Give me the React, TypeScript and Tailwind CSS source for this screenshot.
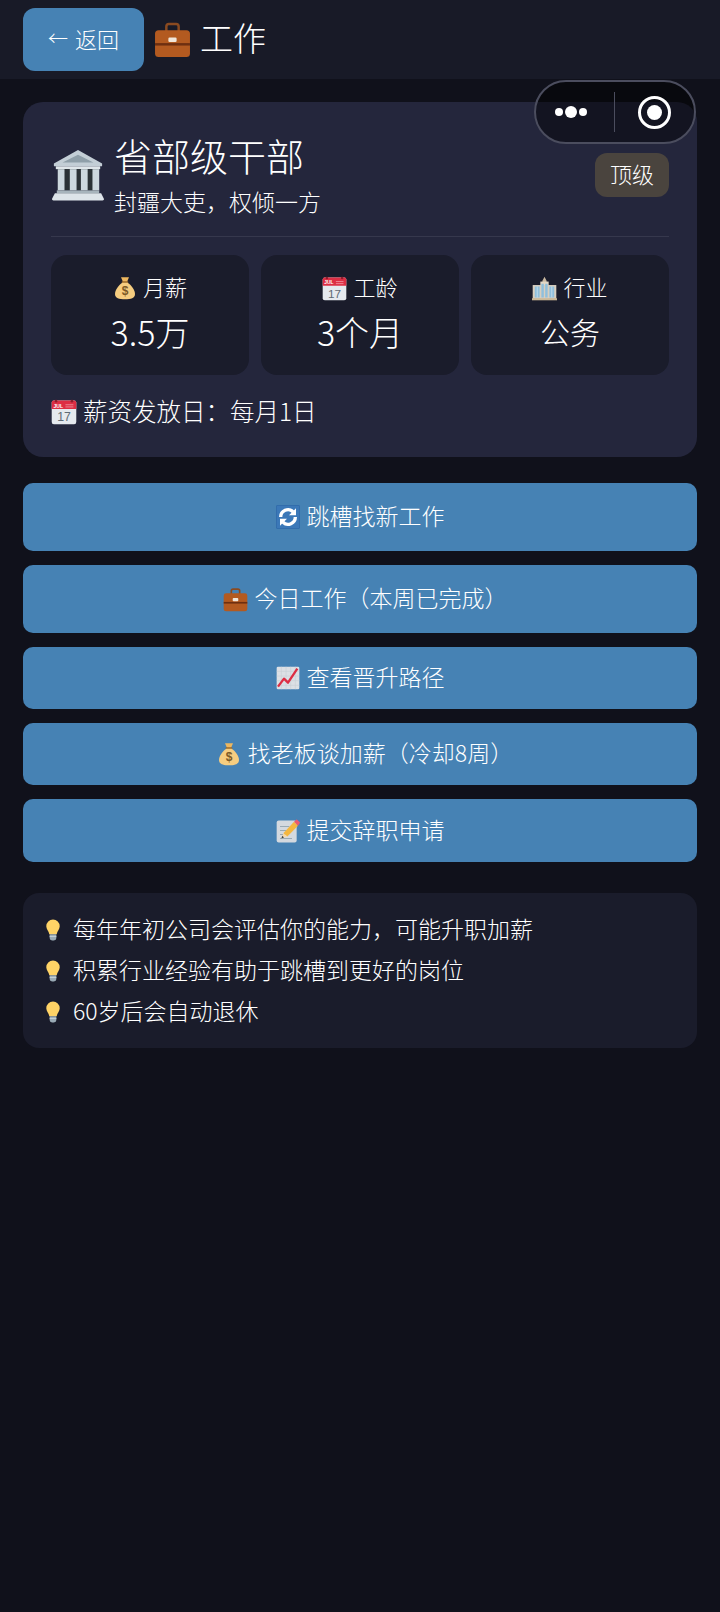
const Briefcase = ({ className }: { className: string }) => (
  <svg viewBox="0 0 36 36" className={className}>
    <path d="M12 10V5.500A2.500 2.500 0 0 1 14.500 3h7A2.500 2.500 0 0 1 24 5.500V10" fill="none" stroke="#8a4a20" strokeWidth="2.400" />
    <rect x="1" y="9" width="34" height="26" rx="3.500" fill="#b35a20" />
    <rect x="1" y="21.500" width="34" height="2.400" fill="#6e2f10" />
    <rect x="14" y="16" width="8" height="4.500" rx="1.200" fill="#f0e6da" />
  </svg>
);

const Bank = ({ className }: { className: string }) => (
  <svg viewBox="0 0 56 56" className={className}>
    <path d="M28 3 53 17v3H3v-3z" fill="#c3ced6" />
    <path d="M28 8 44 16H12z" fill="#8f9fa9" />
    <rect x="5" y="20" width="46" height="3" fill="#dfe6ea" />
    <rect x="7" y="23" width="42" height="22" fill="#2b3236" />
    <rect x="7" y="23" width="7" height="22" fill="#cdd8de" />
    <rect x="19.500" y="23" width="7" height="22" fill="#cdd8de" />
    <rect x="31" y="23" width="7" height="22" fill="#cdd8de" />
    <rect x="43" y="23" width="7" height="22" fill="#cdd8de" />
    <rect x="6" y="45" width="44" height="3" fill="#a7b4bc" />
    <path d="M4 48h48l3 6a1.500 1.500 0 0 1-1.500 1.500h-51A1.500 1.500 0 0 1 1 54z" fill="#dde4e9" />
  </svg>
);

const MoneyBag = ({ className }: { className: string }) => (
  <svg viewBox="0 0 36 36" className={className}>
    <path d="M12 2h12l-3 7h-6z" fill="#eeb75f" />
    <rect x="13" y="8" width="10" height="2.400" rx="1" fill="#9a6a2a" />
    <path d="M14 10h8c6 4 11 11 11 17 0 6-6 8-15 8S3 33 3 27c0-6 5-13 11-17z" fill="#f6cd80" />
    <text x="18" y="29" textAnchor="middle" fontSize="18" fontWeight="700" fill="#7c5a26" fontFamily="'Liberation Sans', sans-serif">$</text>
  </svg>
);

const Calendar = ({ className }: { className: string }) => (
  <svg viewBox="0 0 36 36" className={className}>
    <rect x="1" y="2" width="34" height="33" rx="3" fill="#e5e9ee" />
    <path d="M1 14V5a3 3 0 0 1 3-3h28a3 3 0 0 1 3 3v9z" fill="#dd2e44" />
    <circle cx="7" cy="3" r="1.800" fill="#8e1d2c" />
    <circle cx="29" cy="3" r="1.800" fill="#8e1d2c" />
    <text x="10" y="12" textAnchor="middle" fontSize="7" fontWeight="700" fill="#ffffff" fontFamily="'Liberation Sans', sans-serif">JUL</text>
    <path d="M20 8h11M20 11h11" stroke="#f3aab4" strokeWidth="1" />
    <text x="18" y="31" textAnchor="middle" fontSize="17" fill="#5f6b75" fontFamily="'Liberation Sans', sans-serif">17</text>
  </svg>
);

const Office = ({ className }: { className: string }) => (
  <svg viewBox="0 0 36 36" className={className}>
    <path d="M15 7 18 1l3 6v6h-6z" fill="#c9b8a0" />
    <rect x="12" y="8" width="12" height="25" fill="#e3d8c6" />
    <rect x="1" y="13" width="34" height="20" fill="#d8cfc0" />
    <path d="M4 15h7v16H4zM13.500 11h3.500v20h-3.500zM19 11h3.500v20H19zM25 15h7v16h-7z" fill="#8fbfdc" />
    <path d="M7.500 15v16M28.500 15v16" stroke="#d6e8f2" strokeWidth="1" />
    <rect x="0" y="32" width="36" height="3" fill="#cbb896" />
  </svg>
);

const Refresh = ({ className }: { className: string }) => (
  <svg viewBox="0 0 36 36" className={className}>
    <rect x="0.500" y="0.500" width="35" height="35" rx="2" fill="#3b78b8" stroke="#2a64a4" />
    <path d="M7 18a11 11 0 0 1 18.500-8" fill="none" stroke="#ffffff" strokeWidth="5" />
    <path d="M29 18a11 11 0 0 1-18.500 8" fill="none" stroke="#ffffff" strokeWidth="5" />
    <path d="M30 5v10.500H19.500z" fill="#ffffff" />
    <path d="M6 31V20.500h10.500z" fill="#ffffff" />
  </svg>
);

const Chart = ({ className }: { className: string }) => (
  <svg viewBox="0 0 36 36" className={className}>
    <rect x="1" y="1" width="34" height="34" rx="2" fill="#dce0e5" />
    <path d="M8 1v34M15 1v34M22 1v34M29 1v34M1 8h34M1 15h34M1 22h34M1 29h34" stroke="#c6cdd4" strokeWidth="0.800" />
    <path d="M3 31 12 19l6 6L32 4" fill="none" stroke="#dd2e44" strokeWidth="3.500" strokeLinejoin="round" />
  </svg>
);

const Memo = ({ className }: { className: string }) => (
  <svg viewBox="0 0 36 36" className={className}>
    <rect x="1" y="3" width="30" height="33" rx="3" fill="#d4d9df" />
    <path d="M6 12h14M6 18h10M6 24h8M6 30h18" stroke="#99aab5" strokeWidth="1.500" />
    <path d="M11 22 27 5l6 6-16 16z" fill="#f4b73f" />
    <path d="M27 5l2.500-2.500a2 2 0 0 1 3 0l2.500 2.500a2 2 0 0 1 0 3L33 11z" fill="#ea596e" />
    <path d="M11 22l-3 8 9-3z" fill="#f7d9a8" />
    <path d="M9.500 26 8 30l4-1.500z" fill="#3a3f45" />
  </svg>
);

const Bulb = ({ className }: { className: string }) => (
  <svg viewBox="0 0 24 36" className={className}>
    <path d="M12 1a11 11 0 0 1 11 11c0 5-4 8-5 13H6C5 20 1 17 1 12A11 11 0 0 1 12 1z" fill="#ffd366" />
    <path d="M6.500 25h11v6a4 4 0 0 1-4 4h-3a4 4 0 0 1-4-4z" fill="#99aab5" />
    <path d="M6.500 28.500h11" stroke="#ccd6dd" strokeWidth="1.500" />
  </svg>
);

const stats = [
  { icon: <MoneyBag className="h-[26px] w-[24px]" />, label: '月薪', value: '3.5万', big: true },
  { icon: <Calendar className="h-[25px] w-[25px]" />, label: '工龄', value: '3个月', big: true },
  { icon: <Office className="h-[25px] w-[25px]" />, label: '行业', value: '公务', big: false },
];

const actions = [
  { icon: <Refresh className="h-[24px] w-[24px]" />, text: '跳槽找新工作', box: 'h-[68px]' },
  { icon: <Briefcase className="h-[25px] w-[25px]" />, text: '今日工作（本周已完成）', box: 'h-[68px] pl-[10px]' },
  { icon: <Chart className="h-[24px] w-[24px]" />, text: '查看晋升路径', box: 'h-[62px]' },
  { icon: <MoneyBag className="h-[26px] w-[24px]" />, text: '找老板谈加薪（冷却8周）', box: 'h-[62px] pl-[10px]' },
  { icon: <Memo className="h-[25px] w-[24px]" />, text: '提交辞职申请', box: 'h-[63px]' },
];

const tips = ['每年年初公司会评估你的能力，可能升职加薪', '积累行业经验有助于跳槽到更好的岗位', '60岁后会自动退休'];

export default function App() {
  return (
    <div className="relative min-h-[1612px] bg-[#10111b] font-['Noto_Sans_CJK_SC','Noto_Sans',sans-serif] font-light text-white">
      {/* header */}
      <div className="flex h-[79px] items-center bg-[#181a27] px-[23px]">
        <button className="flex h-[63px] w-[121px] items-center justify-center gap-[7px] rounded-[12px] bg-[#4682b4] pb-[3px] text-[22px] text-white">
          <span className="text-[20px] leading-none">←</span>
          <span>返回</span>
        </button>
        <Briefcase className="ml-[10px] h-[37px] w-[37px]" />
        <h1 className="ml-[9px] pb-[4px] text-[33px]">工作</h1>
      </div>

      {/* wechat capsule */}
      <div className="absolute left-[534px] top-[80px] flex h-[64px] w-[162px] items-center rounded-full border-2 border-[#4b4d5e] bg-black/45">
        <div className="flex w-[51px] items-center justify-end gap-[2px]">
          <span className="h-[8px] w-[8px] rounded-full bg-white" />
          <span className="h-[12px] w-[12px] rounded-full bg-white" />
          <span className="h-[8px] w-[8px] rounded-full bg-white" />
        </div>
        <div className="ml-[27px] h-[40px] w-px bg-[#4b4d5e]" />
        <div className="ml-[23px] flex h-[33px] w-[33px] items-center justify-center rounded-full border-[3px] border-white">
          <span className="h-[15px] w-[15px] rounded-full bg-white" />
        </div>
      </div>

      <div className="px-[23px] pt-[23px]">
        {/* job card */}
        <div className="rounded-[20px] bg-[#24263c] p-[28px]">
          <div className="flex items-center border-b border-[#36384d] pb-[14px]">
            <Bank className="mb-[4px] h-[56px] w-[54px]" />
            <div className="ml-[9px] flex-1">
              <div className="text-[38px] leading-[50px]">省部级干部</div>
              <div className="text-[23px] leading-[42px]">封疆大吏，权倾一方</div>
            </div>
            <div className="mb-[2px] flex h-[44px] w-[74px] items-center justify-center rounded-[12px] bg-[#4a443e] pb-[3px] text-[22px] text-white">顶级</div>
          </div>

          <div className="mt-[18px] grid grid-cols-3 gap-[12px]">
            {stats.map((s) => (
              <div key={s.label} className="h-[120px] rounded-[16px] bg-[#1a1c2b] pt-[16px] text-center">
                <div className="flex h-[34px] items-center justify-center gap-[6px] text-[22px]">
                  {s.icon}
                  <span className="pb-[3px]">{s.label}</span>
                </div>
                <div className={s.big ? 'mt-[4px] text-[34px] leading-[46px]' : 'mt-[6px] text-[30px] leading-[40px]'}>{s.value}</div>
              </div>
            ))}
          </div>

          <div className="mt-[19px] flex h-[35px] items-center gap-[6px] text-[24.500px]">
            <Calendar className="h-[26px] w-[26px]" />
            <span>薪资发放日：每月1日</span>
          </div>
        </div>

        {/* actions */}
        <div className="mt-[26px] flex flex-col gap-[14px]">
          {actions.map((a) => (
            <button key={a.text} className={`flex ${a.box} items-center justify-center gap-[7px] rounded-[10px] bg-[#4682b4] text-[23px] text-white`}>
              {a.icon}
              <span className="pb-[3px]">{a.text}</span>
            </button>
          ))}
        </div>

        {/* tips */}
        <div className="mt-[31px] rounded-[16px] bg-[#1a1c2b] py-[16px] pl-[22px]">
          {tips.map((t) => (
            <div key={t} className="flex h-[41px] items-center gap-[12px] text-[23px]">
              <Bulb className="h-[22px] w-[16px]" />
              <span className="pb-[2px]">{t}</span>
            </div>
          ))}
        </div>
      </div>
    </div>
  );
}
